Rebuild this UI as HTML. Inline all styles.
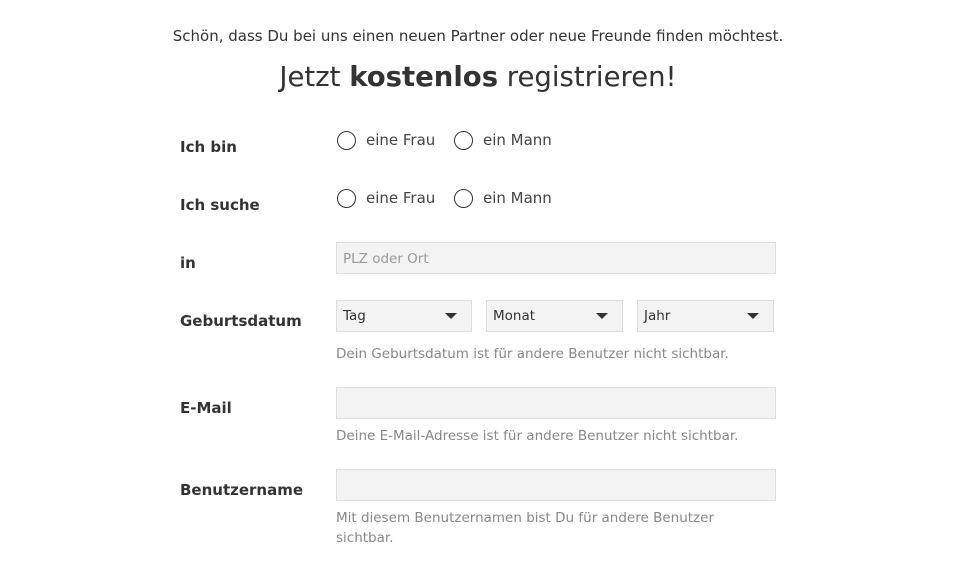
<!DOCTYPE html>
<html><head><meta charset="utf-8"><style>
body{margin:0;width:960px;height:561px;background:#fff;font-family:"DejaVu Sans","Liberation Sans",sans-serif;color:#333;position:relative;overflow:hidden}
.a{position:absolute;white-space:nowrap}
.lbl{position:absolute;left:180px;font-size:15px;font-weight:bold;color:#333}
.rad{position:absolute;width:17px;height:17px;border:1px solid #333;border-radius:50%;background:#fff}
.rt{position:absolute;font-size:15px;color:#444}
.inp{position:absolute;left:336px;width:438px;height:30px;background:#f3f3f3;border:1px solid #ddd}
.sel{position:absolute;top:300px;height:32px;background:#f3f3f3;border:1px solid #ddd;font-size:13.5px;color:#333;line-height:30px;box-sizing:border-box;padding-left:6px}
.sel:after{content:"";position:absolute;right:14px;top:12px;border-left:6px solid transparent;border-right:6px solid transparent;border-top:6px solid #333}
.hint{position:absolute;left:336px;font-size:13.5px;color:#888;line-height:20px;white-space:nowrap}
</style></head><body>
<div class="a" style="left:0;width:956px;text-align:center;top:27px;font-size:15px;color:#333">Schön, dass Du bei uns einen neuen Partner oder neue Freunde finden möchtest.</div>
<div class="a" style="left:0;width:956px;text-align:center;top:61px;font-size:27.5px;color:#333">Jetzt <b>kostenlos</b> registrieren!</div>

<div class="lbl" style="top:138px">Ich bin</div>
<div class="rad" style="left:337px;top:131px"></div><div class="rt" style="left:366px;top:131px">eine Frau</div>
<div class="rad" style="left:454px;top:131px"></div><div class="rt" style="left:483px;top:131px">ein Mann</div>

<div class="lbl" style="top:196px">Ich suche</div>
<div class="rad" style="left:337px;top:189px"></div><div class="rt" style="left:366px;top:189px">eine Frau</div>
<div class="rad" style="left:454px;top:189px"></div><div class="rt" style="left:483px;top:189px">ein Mann</div>

<div class="lbl" style="top:254px">in</div>
<div class="inp" style="top:242px"><span style="position:absolute;left:6px;top:8px;font-size:13.5px;color:#999">PLZ oder Ort</span></div>

<div class="lbl" style="top:312px">Geburtsdatum</div>
<div class="sel" style="left:336px;width:136px">Tag</div>
<div class="sel" style="left:486px;width:137px">Monat</div>
<div class="sel" style="left:637px;width:137px">Jahr</div>
<div class="hint" style="top:344px">Dein Geburtsdatum ist für andere Benutzer nicht sichtbar.</div>

<div class="lbl" style="top:399px">E-Mail</div>
<div class="inp" style="top:387px"></div>
<div class="hint" style="top:426px">Deine E-Mail-Adresse ist für andere Benutzer nicht sichtbar.</div>

<div class="lbl" style="top:481px">Benutzername</div>
<div class="inp" style="top:469px"></div>
<div class="hint" style="top:508px">Mit diesem Benutzernamen bist Du für andere Benutzer<br>sichtbar.</div>
</body></html>
